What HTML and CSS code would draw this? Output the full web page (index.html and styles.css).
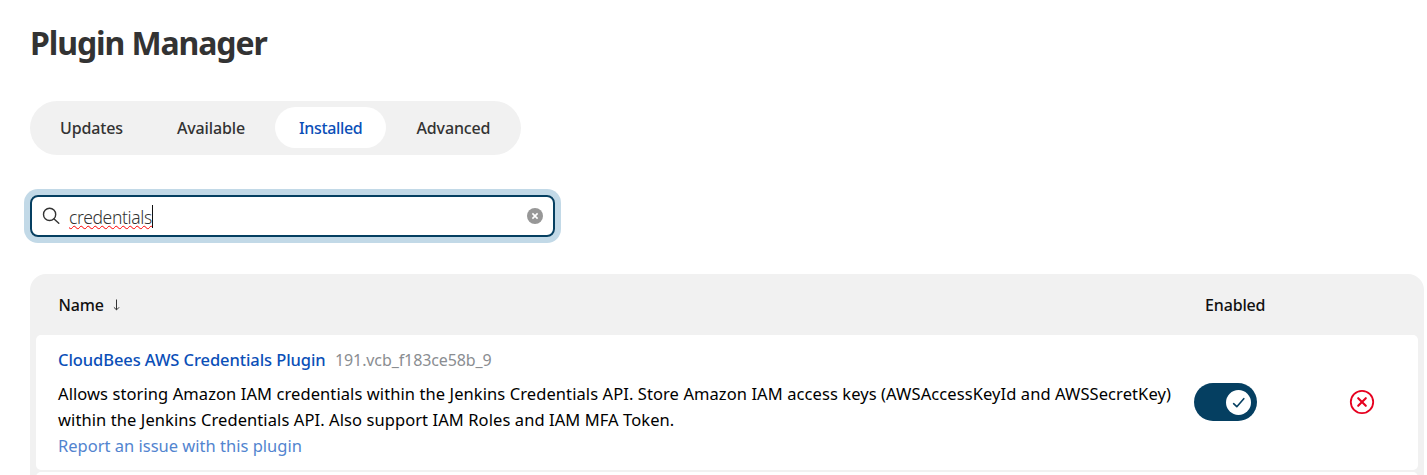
FILE: index.html
```html
<!DOCTYPE html>
<html lang="en">
<head>
<meta charset="utf-8">
<title>Plugin Manager</title>
<link rel="stylesheet" href="styles.css">
</head>
<body>
<main class="page">
  <h1 class="title">Plugin Manager</h1>
  <nav class="tabs">
    <a class="tab tab-updates">Updates</a>
    <a class="tab tab-available">Available</a>
    <a class="tab tab-installed active">Installed</a>
    <a class="tab tab-advanced">Advanced</a>
  </nav>
  <div class="search">
    <svg class="search-icon" width="18" height="18" viewBox="0 0 18 18" fill="none" stroke="#333" stroke-width="1.4" stroke-linecap="round"><circle cx="7.6" cy="7.4" r="6.1"/><path d="M12.1 11.9 16.8 16.2"/></svg>
    <span class="query">credentials</span><span class="caret"></span>
    <svg class="clear" width="16" height="16" viewBox="0 0 16 16"><circle cx="8" cy="8" r="8" fill="#979797"/><path d="M5.4 5.4l5.2 5.2M10.6 5.4l-5.2 5.2" stroke="#fff" stroke-width="1.6"/></svg>
  </div>
  <section class="table">
    <header class="head">
      <span class="name">Name</span>
      <svg class="arrow" width="8" height="12" viewBox="0 0 8 12" fill="none" stroke="#333"><path d="M4.5 .5v10.3M1.9 8.3l2.6 2.6 2.6-2.6"/></svg>
      <span class="enabled">Enabled</span>
    </header>
    <article class="row">
      <div class="info">
        <div class="heading"><a class="plugin">CloudBees AWS Credentials Plugin</a><span class="version">191.vcb_f183ce58b_9</span></div>
        <p class="desc"><span class="line line-a">Allows storing Amazon IAM credentials within the Jenkins Credentials API. Store Amazon IAM access keys (AWSAccessKeyId and AWSSecretKey)</span><span class="line line-b">within the Jenkins Credentials API. Also support IAM Roles and IAM MFA Token.</span></p>
        <a class="report">Report an issue with this plugin</a>
      </div>
      <div class="toggle"><span class="knob"><svg width="25" height="25" viewBox="0 0 25 25" fill="none" stroke="#053f61" stroke-width="1.6" stroke-linecap="round" stroke-linejoin="round"><path d="M7.6 13.7l3.2 3 7-8"/></svg></span></div>
      <svg class="remove" width="26" height="26" viewBox="0 0 26 26" fill="none" stroke="#e6001f" stroke-linecap="round"><circle cx="13" cy="13" r="11.2" stroke-width="1.8"/><path d="M9.2 9.2l7.6 7.6M16.8 9.2l-7.6 7.6" stroke-width="2.1"/></svg>
    </article>
    <article class="row row-next"></article>
  </section>
</main>
</body>
</html>
```
FILE: styles.css
```css
* { box-sizing: border-box; }
body { margin: 0; background: #fff; font-family: "Noto Sans", "Open Sans", sans-serif; font-size: 16px; color: #111; }
.page { height: 475px; overflow: hidden; padding: 21px 3px 0 30px; }
.title { margin: 0 0 36px; height: 44px; line-height: 44px; font-size: 32px; font-weight: 700; color: #333; letter-spacing: -1.1px; white-space: nowrap; }
.tabs { display: flex; width: 491px; height: 54px; padding: 6px; border-radius: 27px; background: #f1f1f1; }
.tab { height: 41px; line-height: 42px; border-radius: 21px; color: #333; font-weight: 500; white-space: nowrap; padding-left: 24px; letter-spacing: -0.15px; }
.tab-updates { width: 117px; }
.tab-available { width: 122px; }
.tab-installed { width: 111px; letter-spacing: -0.35px; }
.tab-advanced { width: 129px; padding-left: 30.5px; }
.active { background: #fff; color: #0b4fb8; }
.search { display: flex; align-items: center; width: 525px; height: 42px; margin-top: 40px; padding: 0 10px; border: 2px solid #053f61; border-radius: 8px; box-shadow: 0 0 0 6px #c2d9e7; }
.search-icon { margin-right: 9px; }
.query { margin-top: 1px; font-size: 17.5px; font-weight: 300; line-height: 24px; color: #333; letter-spacing: -0.35px; text-decoration: underline wavy #f00 1.3px; text-underline-offset: 1px; text-decoration-skip-ink: none; }
.caret { width: 1px; height: 23px; background: #111; }
.clear { margin-left: auto; }
.table { height: 220px; margin-top: 37px; padding: 0 6px; border-radius: 16px; background: #f1f1f1; }
.head { display: flex; align-items: center; height: 61px; padding-left: 22.5px; font-weight: 500; letter-spacing: -0.15px; }
.name { width: 53.5px; }
.enabled { margin-left: 1085px; }
.row { display: flex; align-items: center; height: 135px; padding-left: 22px; border-radius: 5px; background: #fff; }
.row-next { margin-top: 2px; }
.info { width: 1136px; height: 135px; padding-top: 12px; line-height: 26px; white-space: nowrap; }
.heading { display: flex; height: 26px; }
.plugin { width: 277px; color: #0b4fb8; font-size: 16.5px; font-weight: 500; letter-spacing: -0.08px; }
.version { color: #8a8d91; letter-spacing: -0.1px; }
.desc { margin: 8px 0 0; color: #000; font-size: 16.5px; letter-spacing: 0.085px; }
.line { display: block; }
.report { color: #5284cf; font-size: 16.5px; }
.toggle { display: flex; align-items: center; justify-content: flex-end; width: 63px; height: 38px; margin-bottom: 1px; padding-right: 6px; border-radius: 19px; background: #053f61; }
.knob { width: 25px; height: 25px; border-radius: 50%; background: #fff; }
.remove { margin: 0 0 1px 92px; }
```
